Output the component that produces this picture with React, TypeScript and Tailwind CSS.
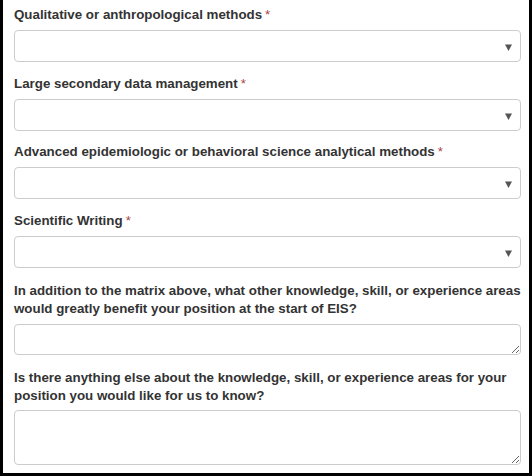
import React from "react";

function Req() {
  return <span className="ml-[3px] font-normal text-[#a94442]">*</span>;
}

function SelectBox() {
  return (
    <div className="flex h-[32px] items-center justify-end rounded-[4px] border border-[#ccc] bg-white pr-[8px]">
      <svg width="7" height="7" viewBox="0 0 7 7" className="mt-[2px]">
        <polygon points="0,0.5 7,0.5 3.5,7" fill="#555" />
      </svg>
    </div>
  );
}

function SelectGroup({ label, className = "" }: { label: string; className?: string }) {
  return (
    <div className={className}>
      <div className="mb-[6px] leading-[18px]">
        {label}
        <Req />
      </div>
      <SelectBox />
    </div>
  );
}

export default function App() {
  return (
    <div
      className="h-[476px] w-[532px] overflow-hidden border-x-[3px] border-b-[3px] border-black bg-white pl-[11px] pr-[8px] pt-[6px] text-[13.33px] font-bold text-[#333]"
      style={{ fontFamily: '"Liberation Sans", Arial, sans-serif' }}
    >
      <SelectGroup label="Qualitative or anthropological methods" />
      <SelectGroup label="Large secondary data management" className="mt-[13px]" />
      <SelectGroup label="Advanced epidemiologic or behavioral science analytical methods" className="mt-[12px]" />
      <SelectGroup label="Scientific Writing" className="mt-[13px]" />
      <div className="mt-[14px]">
        <div className="mb-[6px] leading-[18px]">
          In addition to the matrix above, what other knowledge, skill, or experience areas would greatly benefit your position at the start of EIS?
        </div>
        <textarea className="block h-[31px] w-full rounded-[4px] border border-[#ccc] bg-white outline-none" />
      </div>
      <div className="mt-[14px]">
        <div className="mb-[5px] leading-[18px]">
          Is there anything else about the knowledge, skill, or experience areas for your position you would like for us to know?
        </div>
        <textarea className="block h-[55px] w-full rounded-[4px] border border-[#ccc] bg-white outline-none" />
      </div>
    </div>
  );
}
